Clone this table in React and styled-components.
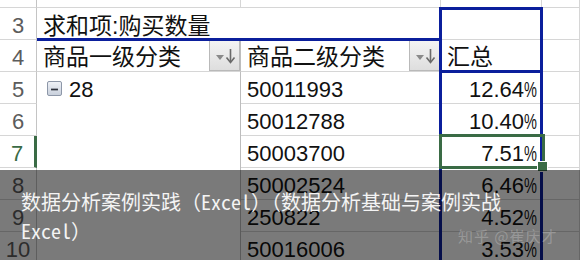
import styled, { createGlobalStyle } from "styled-components";

const GlobalStyle = createGlobalStyle`
  html, body {
    margin: 0;
    padding: 0;
    background: #ffffff;
    overflow: hidden;
  }
`;

const BLUE = "#0b1f9c";
const GREEN = "#3a6b45";
const GRID = "#d6d6d6";

const data = [
  { n: 5, a: "28", b: "50011993", c: "12.64" },
  { n: 6, b: "50012788", c: "10.40" },
  { n: 7, b: "50003700", c: "7.51", selected: true },
  { n: 8, b: "50002524", c: "6.46" },
  { n: 9, b: "250822", c: "4.52" },
  { n: 10, b: "50016006", c: "3.53" },
];

function App() {
  return (
    <>
      <GlobalStyle />
      <Sheet>
        <Row $h={8}>
          <RowHead />
          <Cell />
          <Cell />
          <Cell />
          <Cell />
        </Row>
        <Row $h={32}>
          <RowHead>3</RowHead>
          <Cell $cjk $noRight $pt={6}>求和项:购买数量</Cell>
          <Cell />
          <Cell />
          <Cell />
        </Row>
        <Row $h={32}>
          <RowHead>4</RowHead>
          <Cell $cjk $strongRight $pr={0}>
            商品一级分类
            <FilterButton />
          </Cell>
          <Cell $cjk $pr={0}>
            商品二级分类
            <FilterButton />
          </Cell>
          <Cell $cjk>汇总</Cell>
          <Cell />
        </Row>
        {data.map((r) => (
          <Row $h={32} key={r.n}>
            <RowHead $selected={r.selected}>{r.n}</RowHead>
            <Cell $noBottom $strongRight $pl={10}>
              {r.a && (
                <>
                  <Collapse />
                  <Label>{r.a}</Label>
                </>
              )}
            </Cell>
            <Cell>{r.b}</Cell>
            <Cell $right $pr={4}>
              {r.c}
              <Percent>%</Percent>
            </Cell>
            <Cell />
          </Row>
        ))}

        <PivotRule />
        <ValueFrame>
          <ValueDivider />
        </ValueFrame>
        <Selection>
          <FillHandle />
        </Selection>

        <Caption>
          <CaptionText>
            数据分析案例实践（Excel）（数据分析基础与案例实战Excel）
          </CaptionText>
          <Watermark>知乎 @崔庆才</Watermark>
        </Caption>
      </Sheet>
    </>
  );
}

function FilterButton() {
  return (
    <DropButton>
      <svg width="29" height="28" viewBox="0 0 29 28">
        <path d="M6 13h8l-4 5z" fill="#8a8a8a" />
        <path d="M20.5 7v13" stroke="#6a6a6a" strokeWidth="1.6" />
        <path d="M16.5 15.5l4 5 4-5" stroke="#6a6a6a" strokeWidth="1.6" fill="none" />
      </svg>
    </DropButton>
  );
}

function Collapse() {
  return (
    <CollapseBox>
      <svg width="15" height="15" viewBox="0 0 15 15">
        <path d="M3.5 7.5h8" stroke="#2b2f3a" strokeWidth="2" />
      </svg>
    </CollapseBox>
  );
}

const Sheet = styled.div`
  position: relative;
  width: 580px;
  height: 260px;
  overflow: hidden;
  background: #ffffff;
  font-family: "Liberation Sans", "Noto Sans CJK SC", sans-serif;
`;

const Row = styled.div`
  display: grid;
  grid-template-columns: 37px 204px 200px 101px 1fr;
  height: ${({ $h }) => $h}px;
`;

const RowHead = styled.div`
  box-sizing: border-box;
  display: flex;
  align-items: center;
  justify-content: center;
  padding-top: 4px;
  font-size: 22px;
  line-height: 1;
  color: ${({ $selected }) => ($selected ? GREEN : "#5c5c5c")};
  border-bottom: 1px solid ${GRID};
  border-right: ${({ $selected }) =>
    $selected ? `3px solid ${GREEN}` : "1px solid #c4c4c4"};
`;

const Cell = styled.div`
  box-sizing: border-box;
  display: flex;
  align-items: center;
  justify-content: ${({ $right }) => ($right ? "flex-end" : "flex-start")};
  padding: ${({ $pt = 4 }) => $pt}px ${({ $pr = 5 }) => $pr}px 0
    ${({ $pl = 6 }) => $pl}px;
  font-size: ${({ $cjk }) => ($cjk ? "23px" : "22px")};
  line-height: 1;
  color: #111111;
  white-space: nowrap;
  border-bottom: ${({ $noBottom }) => ($noBottom ? "none" : `1px solid ${GRID}`)};
  border-right: ${({ $noRight, $strongRight }) =>
    $noRight ? "1px solid transparent" : `1px solid ${$strongRight ? "#bdbdbd" : GRID}`};
`;

const Percent = styled.span`
  display: inline-block;
  width: 13px;
  transform: scaleX(0.66);
  transform-origin: left center;
`;

const DropButton = styled.div`
  box-sizing: border-box;
  margin-left: auto;
  align-self: stretch;
  margin-top: -4px;
  width: 31px;
  display: flex;
  align-items: center;
  justify-content: center;
  background: linear-gradient(#f4f4f4, #dedede);
  border: 1px solid #b9b9b9;
`;

const CollapseBox = styled.div`
  box-sizing: border-box;
  width: 15px;
  height: 15px;
  margin-top: -3px;
  border: 1px solid #8d97a8;
  border-radius: 2px;
  background: linear-gradient(#eef1f6, #c9d0dc);
  display: flex;
`;

const Label = styled.span`
  margin-left: 7px;
`;

const PivotRule = styled.div`
  position: absolute;
  left: 37px;
  top: 38px;
  width: 403px;
  height: 3px;
  background: ${BLUE};
`;

const ValueFrame = styled.div`
  position: absolute;
  left: 439px;
  top: 7px;
  width: 104px;
  height: 270px;
  box-sizing: border-box;
  border: 3px solid ${BLUE};
`;

const ValueDivider = styled.div`
  position: absolute;
  left: 0;
  right: 0;
  top: 60px;
  height: 3px;
  background: ${BLUE};
`;

const Selection = styled.div`
  position: absolute;
  left: 439px;
  top: 134px;
  width: 106px;
  height: 35px;
  box-sizing: border-box;
  border: 3px solid ${GREEN};
`;

const FillHandle = styled.div`
  position: absolute;
  right: -6px;
  bottom: -6px;
  width: 9px;
  height: 9px;
  background: ${GREEN};
  border: 1px solid #ffffff;
`;

const Caption = styled.div`
  position: absolute;
  left: 0;
  right: 0;
  top: 170px;
  bottom: 0;
  background: rgba(0, 0, 0, 0.52);
  padding: 17px 40px 0 21px;
`;

const CaptionText = styled.div`
  font-family: "Noto Sans Mono CJK SC", "Noto Sans CJK SC", monospace;
  font-size: 20px;
  line-height: 29px;
  color: #f4f4f4;
`;

const Watermark = styled.div`
  position: absolute;
  left: 458px;
  top: 55px;
  font-family: "Noto Sans CJK SC", sans-serif;
  font-size: 15px;
  letter-spacing: 1px;
  color: rgba(255, 255, 255, 0.24);
`;

export default App;
